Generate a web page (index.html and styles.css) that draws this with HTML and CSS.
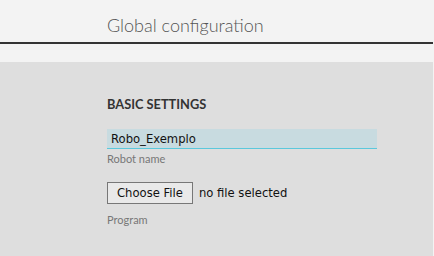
FILE: index.html
```html
<!DOCTYPE html>
<html>
<head>
<meta charset="utf-8">
<link rel="stylesheet" href="styles.css">
</head>
<body>
<header class="topbar">
  <h1 class="title">Global configuration</h1>
</header>
<div class="spacer"></div>
<main class="content">
  <section class="panel">
    <h2 class="section-title">BASIC SETTINGS</h2>
    <div class="field">
      <input class="text-input" type="text" value="Robo_Exemplo">
      <label class="field-label">Robot name</label>
    </div>
    <div class="field file-field">
      <div class="file-row">
        <span class="file-btn">Choose File</span>
        <span class="file-status">no file selected</span>
      </div>
      <label class="field-label">Program</label>
    </div>
  </section>
</main>
</body>
</html>
```
FILE: styles.css
```css
html, body {
  margin: 0;
  padding: 0;
  background: #f3f3f3;
  font-family: Lato, "Liberation Sans", sans-serif;
}
body {
  width: 433px;
  height: 256px;
  overflow: hidden;
}
.topbar {
  height: 42px;
  border-bottom: 2px solid #333;
  box-sizing: content-box;
}
.title {
  margin: 0;
  padding: 14px 0 0 107px;
  font-weight: 300;
  font-size: 18px;
  line-height: 22px;
  color: #555;
}
.spacer {
  height: 18px;
}
.content {
  background: #dedede;
  height: 200px;
  padding: 35px 0 0 107px;
  box-sizing: border-box;
}
.panel {
  width: 270px;
}
.section-title {
  margin: 0 0 18px;
  font-size: 12.8px;
  line-height: 14px;
  font-weight: 700;
  color: #333;
}
.field {
  display: flex;
  flex-direction: column;
}
.text-input {
  width: 270px;
  height: 20px;
  box-sizing: border-box;
  border: 0;
  border-bottom: 1px solid #5bc8dc;
  background: #c8dbe0;
  padding: 0 4px;
  font-family: "DejaVu Sans", sans-serif;
  font-size: 11.6px;
  color: #111;
  outline: none;
}
.field-label {
  font-size: 11px;
  line-height: 14px;
  color: #777;
  margin-top: 3px;
}
.file-field {
  margin-top: 16px;
}
.file-row {
  display: flex;
  align-items: center;
  gap: 6px;
}
.file-btn {
  display: inline-block;
  border: 1px solid #777;
  background: #e9e9e9;
  height: 22px;
  box-sizing: border-box;
  padding: 0 9px;
  line-height: 20px;
  font-family: "DejaVu Sans", sans-serif;
  font-size: 11.6px;
  color: #111;
}
.file-status {
  font-family: "DejaVu Sans", sans-serif;
  font-size: 11.6px;
  color: #111;
}
.file-field .field-label {
  margin-top: 9px;
}
```
